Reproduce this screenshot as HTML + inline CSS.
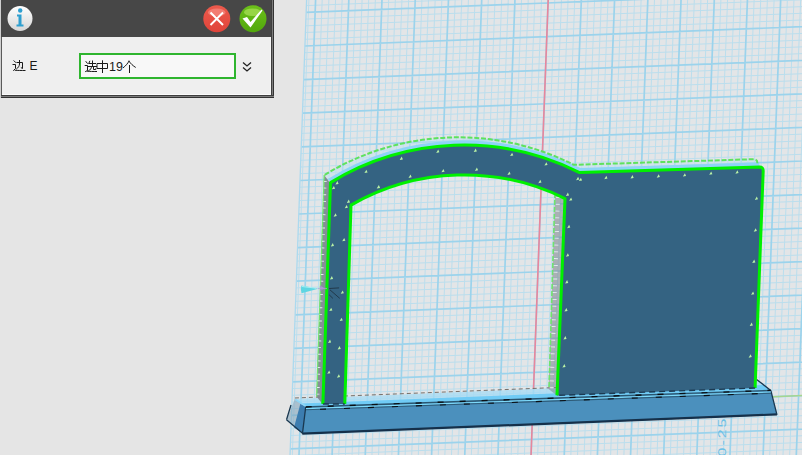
<!DOCTYPE html>
<html><head><meta charset="utf-8">
<style>
html,body{margin:0;padding:0;}
body{width:802px;height:455px;overflow:hidden;background:#e5e5e5;position:relative;font-family:"Liberation Sans",sans-serif;}
#scene{position:absolute;left:0;top:0;}
#dlg{position:absolute;left:0;top:0;width:274px;height:97px;}
#hdr{position:absolute;left:1px;top:0;width:271px;height:37px;background:#474747;}
#body{position:absolute;left:2px;top:37px;width:269px;height:58px;background:#efefef;}
#bl{position:absolute;left:0;top:0;width:1px;height:98px;background:#cfcfcf;}
#bl2{position:absolute;left:1px;top:37px;width:1px;height:61px;background:#5a5a5a;}
#br{position:absolute;left:271px;top:0;width:3px;height:98px;background:linear-gradient(to right,#3e3e3e 0,#3e3e3e 1px,#7c7c7c 1px,#7c7c7c 2px,#333 2px);}
#bb{position:absolute;left:1px;top:95px;width:273px;height:3px;background:linear-gradient(to bottom,#3e3e3e 0,#3e3e3e 1px,#7c7c7c 1px,#7c7c7c 2px,#333 2px);}
#bbi{position:absolute;left:2px;top:94px;width:269px;height:1px;background:#fbfbfb;}
#bri{position:absolute;left:270px;top:37px;width:1px;height:58px;background:#f6f6f6;}
#inp{position:absolute;left:79px;top:53px;width:153px;height:22px;border:2px solid #2fb52f;background:#f8f8f8;}
</style></head><body>
<svg id="scene" width="802" height="455" viewBox="0 0 802 455">
<polygon points="286.6,549.4 308.6,-55.0 916.6,-78.5 893.0,525.9" fill="#e3e5e7"/>
<path d="M288.9 549.3L310.9 -55.1M302.2 548.8L324.2 -55.6M308.8 548.5L330.9 -55.8M315.5 548.3L337.6 -56.1M322.1 548.0L344.2 -56.3M335.4 547.5L357.5 -56.9M342.0 547.2L364.2 -57.1M348.7 547.0L370.8 -57.4M355.3 546.7L377.5 -57.6M368.6 546.2L390.8 -58.2M375.2 546.0L397.5 -58.4M381.8 545.7L404.1 -58.7M388.5 545.4L410.8 -58.9M401.8 544.9L424.1 -59.4M408.4 544.7L430.7 -59.7M415.0 544.4L437.4 -60.0M421.7 544.2L444.1 -60.2M435.0 543.6L457.4 -60.7M441.6 543.4L464.0 -61.0M448.2 543.1L470.7 -61.2M454.9 542.9L477.3 -61.5M468.1 542.4L490.6 -62.0M474.8 542.1L497.3 -62.3M481.4 541.8L504.0 -62.5M488.1 541.6L510.6 -62.8M501.3 541.1L523.9 -63.3M508.0 540.8L530.6 -63.6M514.6 540.6L537.2 -63.8M521.2 540.3L543.9 -64.1M534.5 539.8L557.2 -64.6M541.2 539.5L563.9 -64.9M547.8 539.3L570.5 -65.1M554.4 539.0L577.2 -65.4M567.7 538.5L590.5 -65.9M574.4 538.2L597.1 -66.1M581.0 538.0L603.8 -66.4M587.6 537.7L610.5 -66.7M600.9 537.2L623.8 -67.2M607.5 537.0L630.4 -67.4M614.2 536.7L637.1 -67.7M620.8 536.4L643.7 -67.9M634.1 535.9L657.1 -68.5M640.7 535.7L663.7 -68.7M647.4 535.4L670.4 -69.0M654.0 535.1L677.0 -69.2M667.3 534.6L690.3 -69.8M673.9 534.4L697.0 -70.0M680.6 534.1L703.6 -70.3M687.2 533.9L710.3 -70.5M700.5 533.3L723.6 -71.0M707.1 533.1L730.3 -71.3M713.7 532.8L736.9 -71.6M720.4 532.6L743.6 -71.8M733.7 532.1L756.9 -72.3M740.3 531.8L763.5 -72.6M746.9 531.5L770.2 -72.8M753.6 531.3L776.9 -73.1M766.8 530.8L790.2 -73.6M773.5 530.5L796.8 -73.9M780.1 530.3L803.5 -74.1M786.8 530.0L810.1 -74.4M800.0 529.5L823.5 -74.9M806.7 529.2L830.1 -75.2M813.3 529.0L836.8 -75.4M819.9 528.7L843.4 -75.7M833.2 528.2L856.7 -76.2M839.9 527.9L863.4 -76.5M846.5 527.7L870.0 -76.7M853.1 527.4L876.7 -77.0M866.4 526.9L890.0 -77.5M873.1 526.7L896.7 -77.7M879.7 526.4L903.3 -78.0M886.3 526.1L910.0 -78.3M286.8 542.7L893.2 519.2M287.1 536.0L893.5 512.5M287.3 529.3L893.8 505.8M287.6 522.6L894.0 499.1M288.1 509.2L894.5 485.7M288.3 502.5L894.8 479.0M288.5 495.8L895.1 472.3M288.8 489.1L895.3 465.6M289.3 475.7L895.8 452.2M289.5 469.0L896.1 445.5M289.8 462.3L896.4 438.8M290.0 455.6L896.6 432.1M290.5 442.2L897.2 418.7M290.7 435.5L897.4 412.0M291.0 428.8L897.7 405.3M291.2 422.1L897.9 398.6M291.7 408.7L898.5 385.2M292.0 402.0L898.7 378.4M292.2 395.3L899.0 371.7M292.4 388.6L899.3 365.0M292.9 375.1L899.8 351.6M293.2 368.4L900.1 344.9M293.4 361.7L900.3 338.2M293.7 355.0L900.6 331.5M294.2 341.6L901.1 318.1M294.4 334.9L901.4 311.4M294.6 328.2L901.6 304.7M294.9 321.5L901.9 297.9M295.4 308.0L902.4 284.5M295.6 301.3L902.7 277.8M295.9 294.6L902.9 271.1M296.1 287.9L903.2 264.4M296.6 274.5L903.7 251.0M296.8 267.8L904.0 244.2M297.1 261.1L904.3 237.5M297.3 254.3L904.5 230.8M297.8 240.9L905.0 217.4M298.1 234.2L905.3 210.7M298.3 227.5L905.6 203.9M298.6 220.8L905.8 197.2M299.0 207.3L906.4 183.8M299.3 200.6L906.6 177.1M299.5 193.9L906.9 170.4M299.8 187.2L907.1 163.6M300.3 173.7L907.7 150.2M300.5 167.0L907.9 143.5M300.8 160.3L908.2 136.8M301.0 153.6L908.5 130.0M301.5 140.1L909.0 116.6M301.7 133.4L909.3 109.9M302.0 126.7L909.5 103.1M302.2 120.0L909.8 96.4M302.7 106.5L910.3 83.0M303.0 99.8L910.6 76.3M303.2 93.1L910.8 69.5M303.5 86.3L911.1 62.8M303.9 72.9L911.6 49.4M304.2 66.2L911.9 42.6M304.4 59.4L912.2 35.9M304.7 52.7L912.4 29.2M305.2 39.3L912.9 15.7M305.4 32.5L913.2 9.0M305.7 25.8L913.5 2.3M305.9 19.1L913.7 -4.5M306.4 5.6L914.3 -17.9M306.6 -1.1L914.5 -24.7M306.9 -7.8L914.8 -31.4M307.1 -14.6L915.0 -38.1M307.6 -28.0L915.6 -51.6M307.9 -34.8L915.8 -58.3M308.1 -41.5L916.1 -65.1M308.4 -48.2L916.4 -71.8" stroke="#bbdeed" stroke-width="1" fill="none"/>
<path d="M295.6 549.0L317.6 -55.3M328.7 547.8L350.9 -56.6M361.9 546.5L384.1 -57.9M395.1 545.2L417.4 -59.2M428.3 543.9L450.7 -60.5M461.5 542.6L484.0 -61.8M494.7 541.3L517.3 -63.0M527.9 540.0L550.6 -64.3M561.1 538.8L583.8 -65.6M594.3 537.5L617.1 -66.9M627.5 536.2L650.4 -68.2M660.6 534.9L683.7 -69.5M693.8 533.6L717.0 -70.8M727.0 532.3L750.2 -72.1M760.2 531.0L783.5 -73.4M793.4 529.7L816.8 -74.7M826.6 528.5L850.1 -75.9M859.8 527.2L883.4 -77.2M893.0 525.9L916.6 -78.5M286.6 549.4L893.0 525.9M287.8 515.9L894.3 492.4M289.0 482.4L895.6 458.9M290.2 448.9L896.9 425.4M291.5 415.4L898.2 391.9M292.7 381.8L899.5 358.3M293.9 348.3L900.8 324.8M295.1 314.8L902.2 291.2M296.4 281.2L903.5 257.7M297.6 247.6L904.8 224.1M298.8 214.0L906.1 190.5M300.0 180.5L907.4 156.9M301.2 146.9L908.7 123.3M302.5 113.2L910.0 89.7M303.7 79.6L911.4 56.1M304.9 46.0L912.7 22.4M306.1 12.3L914.0 -11.2M307.4 -21.3L915.3 -44.9M308.6 -55.0L916.6 -78.5" stroke="#9bd3ec" stroke-width="1.7" fill="none"/>
<path d="M286.6 549.4L308.6 -55.0" stroke="#acd9ee" stroke-width="1.3"/>
<path d="M550.6 -64.3L533.5 389.5M532.2 424.0L527.9 540.0" stroke="#e8869c" stroke-width="1.6"/>
<path d="M532.9 406.0L898.2 391.9" stroke="#a6d68e" stroke-width="1.5"/>


<text transform="translate(725.5,456.5) rotate(-90) scale(1.45,1)" font-size="11" letter-spacing="1.4" fill="#6cc0e6" font-family="Liberation Sans">0-25</text>
<!-- base top face -->
<polygon points="294.9,399 756.6,379.5 770.8,390.4 307.3,406.9" fill="#a6dbf4" fill-opacity="0.75"/>
<path d="M294.9 398L756.6 379.5" stroke="#77706a" stroke-width="1" stroke-dasharray="4 3" fill="none"/>
<polygon points="301,403.5 763,385 770.8,390.4 305.7,407" fill="#70cbf5"/>
<!-- base left end -->
<polygon points="294.9,399 307.3,406.9 302.8,433.6 286.5,419.7" fill="#7ea3ba" fill-opacity="0.55"/>
<polygon points="300.3,403.9 307.3,406.9 302.8,433.6 294,427.5" fill="#3c7db0"/>
<path d="M295.5 399.5L307 407" stroke="#8fd7f7" stroke-width="1.5"/>
<!-- base front -->
<polygon points="305.7,407 770.8,390.4 777,414.9 302.4,434.1" fill="#4b90bd"/>
<path d="M302.4 433.6L777 414.4" stroke="#15304a" stroke-width="2.2" fill="none"/>
<path d="M305.7 407L302.4 434.1M770.8 390.4L777 414.9M770.8 390.4L756.6 379.5M286.5 419.7L302.8 433.6M291 405L286.5 419.7" stroke="#1a3850" stroke-width="1.3" fill="none"/>
<path d="M305.7 407L770.8 390.4" stroke="#2a5670" stroke-width="1.4" fill="none"/>
<path d="M305.7 407L770.8 390.4" stroke="#0a0f14" stroke-width="1.4" stroke-dasharray="6 16" fill="none"/>
<path d="M306 408.6L771 392" stroke="#7fdcfb" stroke-width="1.1" fill="none"/>
<path d="M306 409.8L771 393.2" stroke="#2e5b78" stroke-width="1.1" fill="none"/>
<path d="M306 409.8L771 393.2" stroke="#0a0f14" stroke-width="1.1" stroke-dasharray="6 18" stroke-dashoffset="10" fill="none"/>
<!-- jamb side faces -->
<polygon points="324.2,175.1 330,182.9 322.5,404 316.5,396.5" fill="#7b858d" fill-opacity="0.9"/>
<path d="M324.2 175.1L316.7 396.5" stroke="#6ee46e" stroke-width="1.3" fill="none"/>
<path d="M325.3 181L318 398" stroke="#e8eef2" stroke-width="2.6" stroke-dasharray="0.9 5.75" fill="none"/>
<polygon points="555,193 565,198.6 557,395.4 548.5,389" fill="#7b858d" fill-opacity="0.55"/>
<path d="M555 193L549 389" stroke="#6ee46e" stroke-width="1.6" stroke-dasharray="5 2" fill="none"/>
<path d="M558 197L551.5 392" stroke="#e8eef2" stroke-width="4" stroke-dasharray="0.9 5.9" fill="none"/>
<!-- top face -->
<path d="M330.5 182.6 A256.6 256.6 0 0 1 579.6 172.6 L759.5 167.0 Q763.3 167 763.2 171.0 L757.4 163.2 Q757.5 159.2 753.7 159.2 L573.8 164.8 A256.6 256.6 0 0 0 324.7 174.8 Z" fill="#bfe2f2" fill-opacity="0.5"/>
<path d="M330.5 182.6 A256.6 256.6 0 0 1 579.6 172.6 L759.5 167.0" stroke="#8ed4f6" stroke-width="9" fill="none" stroke-linejoin="round"/>
<path d="M324.7 174.8 A256.6 256.6 0 0 1 573.8 164.8 L753.7 159.2 Q757.5 159.2 757.4 163.2" stroke="#5ee25e" stroke-width="2" stroke-dasharray="5 1.8" fill="none"/>
<!-- front face -->
<path d="M322.9 404.0 L330.5 182.6 A256.6 256.6 0 0 1 579.6 172.6 L759.5 167.0 Q763.3 167 763.2 171.0 L755.1 388.0 L557.0 395.4 L565.0 198.6 A226.8 226.8 0 0 0 351.0 205.1 L344.8 404.0 Z" fill="#346382"/>
<path d="M322.9 404.0 L330.5 182.6 A256.6 256.6 0 0 1 579.6 172.6 L759.5 167.0 Q763.3 167 763.2 171.0 L755.1 388.0" fill="none" stroke="#00f000" stroke-width="3" stroke-linejoin="round"/>
<path d="M557.0 395.4 L565.0 198.6 A226.8 226.8 0 0 0 351.0 205.1 L344.8 404.0" fill="none" stroke="#00f000" stroke-width="3" stroke-linejoin="round"/>
<path d="M322.9 404.0 L344.8 404.0" stroke="#1c3a52" stroke-width="1.4" stroke-dasharray="6 4"/>
<path d="M755.1 388.0 L557.0 395.4" stroke="#1c3a52" stroke-width="1.4" stroke-dasharray="6 4"/>
<path d="M399.7 160.0l3.2 -0.6l-1.2 -2.8zM436.2 152.9l3.2 -0.6l-1.2 -2.8zM473.7 152.0l3.2 -0.6l-1.2 -2.8zM376.9 188.5l3.2 -0.6l-1.2 -2.8zM408.5 177.9l3.2 -0.6l-1.2 -2.8zM441.4 172.3l3.2 -0.6l-1.2 -2.8zM474.9 170.9l3.2 -0.6l-1.2 -2.8zM510.1 156.1l3.2 -0.6l-1.2 -2.8zM544.4 165.6l3.2 -0.6l-1.2 -2.8zM507.4 174.9l3.2 -0.6l-1.2 -2.8zM538.3 183.2l3.2 -0.6l-1.2 -2.8zM576.1 180.2l3.2 -0.6l-1.2 -2.8zM578.9 181.1l3.2 -0.6l-1.2 -2.8zM565.9 196.0l3.2 -0.6l-1.2 -2.8zM569.1 200.8l3.2 -0.6l-1.2 -2.8zM364.4 173.1l3.2 -0.6l-1.2 -2.8zM335.4 184.5l3.2 -0.6l-1.2 -2.8zM331.9 189.3l3.2 -0.6l-1.2 -2.8zM376.7 188.6l3.2 -0.6l-1.2 -2.8zM346.8 203.0l3.2 -0.6l-1.2 -2.8zM344.7 208.3l3.2 -0.6l-1.2 -2.8zM333.6 216.7l3.2 -0.6l-1.2 -2.8zM604.3 179.2l3.2 -0.6l-1.2 -2.8zM630.5 178.5l3.2 -0.6l-1.2 -2.8zM656.7 177.7l3.2 -0.6l-1.2 -2.8zM682.9 176.6l3.2 -0.6l-1.2 -2.8zM709.2 174.8l3.2 -0.6l-1.2 -2.8zM735.4 173.7l3.2 -0.6l-1.2 -2.8zM754.8 199.9l3.2 -0.6l-1.2 -2.8zM753.7 231.7l3.2 -0.6l-1.2 -2.8zM752.2 263.0l3.2 -0.6l-1.2 -2.8zM751.1 294.8l3.2 -0.6l-1.2 -2.8zM749.7 326.0l3.2 -0.6l-1.2 -2.8zM748.6 357.7l3.2 -0.6l-1.2 -2.8zM340.7 293.8l3.2 -0.6l-1.2 -2.8zM329.2 311.1l3.2 -0.6l-1.2 -2.8zM339.6 321.1l3.2 -0.6l-1.2 -2.8zM328.0 343.0l3.2 -0.6l-1.2 -2.8zM337.6 349.5l3.2 -0.6l-1.2 -2.8zM327.2 373.8l3.2 -0.6l-1.2 -2.8zM336.9 377.7l3.2 -0.6l-1.2 -2.8zM330.8 246.5l3.2 -0.6l-1.2 -2.8zM342.2 241.3l3.2 -0.6l-1.2 -2.8zM329.9 279.5l3.2 -0.6l-1.2 -2.8zM567.1 228.2l3.2 -0.6l-1.2 -2.8zM565.9 256.7l3.2 -0.6l-1.2 -2.8zM565.1 283.5l3.2 -0.6l-1.2 -2.8zM564.4 311.5l3.2 -0.6l-1.2 -2.8zM563.4 339.5l3.2 -0.6l-1.2 -2.8zM562.4 367.5l3.2 -0.6l-1.2 -2.8z" fill="#b9f2a6"/>
<path d="M329.2 288.5L339.1 287.9M329.9 289.8L339.8 298.4M329.2 294.8L332.9 298.4" stroke="#1f3444" stroke-width="0.9" fill="none"/>
<path d="M320 285L324.8 288.3L320 291.5Z" fill="#a48ad0" opacity="0.8"/>
<path d="M318 288.5L327 288.5" stroke="#b69ad8" stroke-width="1.2" opacity="0.7"/>
<path d="M301.5 285.5Q300 289 301.5 293.3L318.3 288.7Z" fill="#5ed6e2"/>
<path d="M302 286.5L316 288.2" stroke="#a8f0f4" stroke-width="1"/>

</svg>
<div id="dlg">
<div id="hdr"></div>
<div id="body"></div>
<div id="bl"></div><div id="bl2"></div>
<div id="bri"></div><div id="bbi"></div>
<div id="br"></div><div id="bb"></div>
<div id="inp"></div>
<svg width="274" height="97" style="position:absolute;left:0;top:0">
<defs>
<linearGradient id="gi" x1="0" y1="0" x2="0" y2="1"><stop offset="0" stop-color="#ffffff"/><stop offset="1" stop-color="#d6d6d6"/></linearGradient>
<linearGradient id="gr" x1="0" y1="0" x2="0" y2="1"><stop offset="0" stop-color="#ec5a4c"/><stop offset="1" stop-color="#e0443a"/></linearGradient>
<linearGradient id="gg" x1="0" y1="0" x2="0" y2="1"><stop offset="0" stop-color="#6cc01a"/><stop offset="1" stop-color="#52a80c"/></linearGradient>
</defs>
<circle cx="20" cy="18.5" r="12.5" fill="url(#gi)"/>
<circle cx="20.2" cy="10.5" r="2.2" fill="#2e9fd0"/>
<path d="M17 14.5h4.5v10h2v2h-7v-2h2v-8h-1.5z" fill="#2e9fd0"/>
<circle cx="216.8" cy="18.7" r="13.5" fill="url(#gr)"/>
<ellipse cx="216.8" cy="12.5" rx="8.8" ry="4" fill="#f58a80" opacity="0.75"/>
<path d="M210.5 12.5L223 25M223 12.5L210.5 25" stroke="#fff" stroke-width="2"/>
<circle cx="253" cy="18.7" r="13.5" fill="url(#gg)"/>
<ellipse cx="252.5" cy="12.2" rx="8.5" ry="3.8" fill="#a3dc52" opacity="0.8"/>
<path d="M242.5 18.5L247 17L250.5 22L261.5 9.5L262.5 10.5L250.5 27.5Z" fill="#fff"/>
<g fill="none" stroke="#1a1a1a" stroke-width="1" stroke-linecap="square">
<path d="M14 60.8L15.6 62.4M13 64.5H15.5V68.5L13.6 70.4M15.2 70.3C18 70.5 21 70.5 25 70.5M17 62.5H22.5V68.5L21.3 67.8M19.5 60.5V64C19.3 66 18.5 67.5 16.6 68.9"/>
<path d="M86 61.6L87.3 63.3M85.2 65.5H87.5V70.5L85.6 71.5M87.3 71.2C90 71.5 93 71.5 96.5 71.5M89.7 61.3L88.9 63.3M89.2 63.5H95.5M92.5 61V66.5M88 66.5H96.5M91.5 66.8C91.3 68.6 90.6 69.8 88.8 70.6M93.5 66.8V69.5H95.8V68.8"/>
<path d="M97.5 63.5H107.5V68.5H97.5ZM102.5 60.8V72.5"/>
<path d="M129 61.2C127.5 63.8 125.5 66 123.4 67.6M129 61.2C130.8 63.8 133 65.8 135.3 67.2M129.5 65.5V72.5"/>
</g>
<text x="29.5" y="70" font-size="12" fill="#1a1a1a">E</text>
<text x="109" y="71.3" font-size="12.5" fill="#1a1a1a">19</text>
<path d="M243 62.5l4 3.5l4-3.5M243 67.5l4 3.5l4-3.5" stroke="#222" stroke-width="1.3" fill="none"/>

</svg>
</div>
</body></html>
